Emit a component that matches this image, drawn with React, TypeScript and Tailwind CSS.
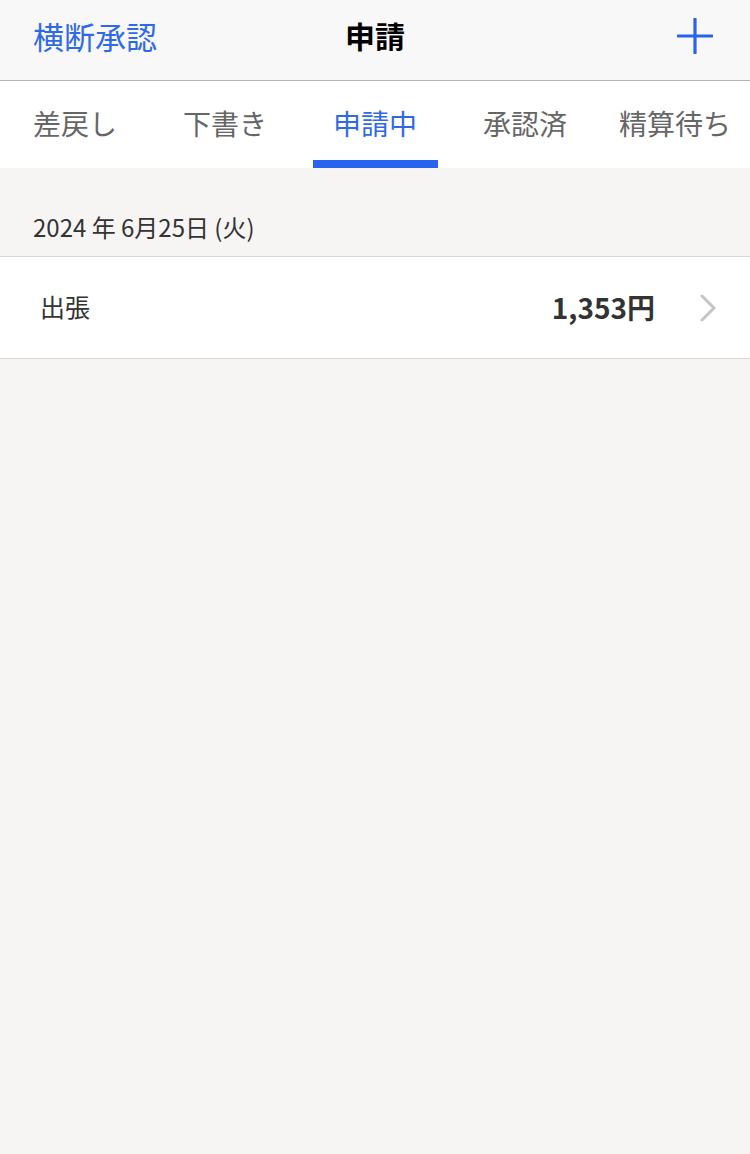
import React from "react";

const tabs = ["差戻し", "下書き", "申請中", "承認済", "精算待ち"];

export default function App() {
  return (
    <div
      className="w-[750px] h-[1154px] bg-[#f6f5f4] flex flex-col"
      style={{ fontFamily: '"Noto Sans CJK JP", "Noto Sans", sans-serif' }}
    >
      <div className="h-[81px] bg-[#f9f8f8] border-b border-[#b4b4b4] flex items-center justify-between pl-[33px] pr-[37px] relative shrink-0">
        <span className="text-[31px] leading-none text-[#2f6ae6] -mt-[10px]">横断承認</span>
        <span className="absolute left-1/2 top-[20px] -translate-x-1/2 text-[30px] font-bold leading-none text-black">申請</span>
        <svg width="36" height="36" viewBox="0 0 36 36" className="-mt-[8px]">
          <path d="M18 1v34M1 18h34" stroke="#2962ef" strokeWidth="3.2" strokeLinecap="round" />
        </svg>
      </div>
      <div className="h-[87px] bg-white flex shrink-0">
        {tabs.map((t, i) => (
          <div key={t} className="w-[150px] relative flex items-center justify-center">
            <span
              className={
                "text-[28px] leading-none -mt-[4px] " +
                (i === 2 ? "text-[#2f6ae6]" : "text-[#666666]")
              }
            >
              {t}
            </span>
            {i === 2 && (
              <div className="absolute bottom-0 left-[13px] w-[125px] h-[8px] bg-[#2962ef]" />
            )}
          </div>
        ))}
      </div>
      <div className="h-[88px] flex items-end pb-[16px] px-[33px] shrink-0">
        <span className="text-[24px] leading-[26px] text-[#333333] whitespace-pre">2024 年 6月25日 (火)</span>
      </div>
      <div className="h-[103px] bg-white border-y border-[#d9d5d5] flex items-center pl-[40px] pr-[34px] shrink-0">
        <span className="text-[25px] leading-none text-[#333333] flex-1 -mt-[2px]">出張</span>
        <span className="text-[28px] font-bold leading-none text-[#333333] mr-[45px] -mt-[2px]">1,353円</span>
        <svg width="16" height="28" viewBox="0 0 16 28">
          <path d="M2 2l12 12L2 26" fill="none" stroke="#c5c5c8" strokeWidth="3" strokeLinecap="round" strokeLinejoin="round" />
        </svg>
      </div>
      <div className="flex-1" />
    </div>
  );
}
